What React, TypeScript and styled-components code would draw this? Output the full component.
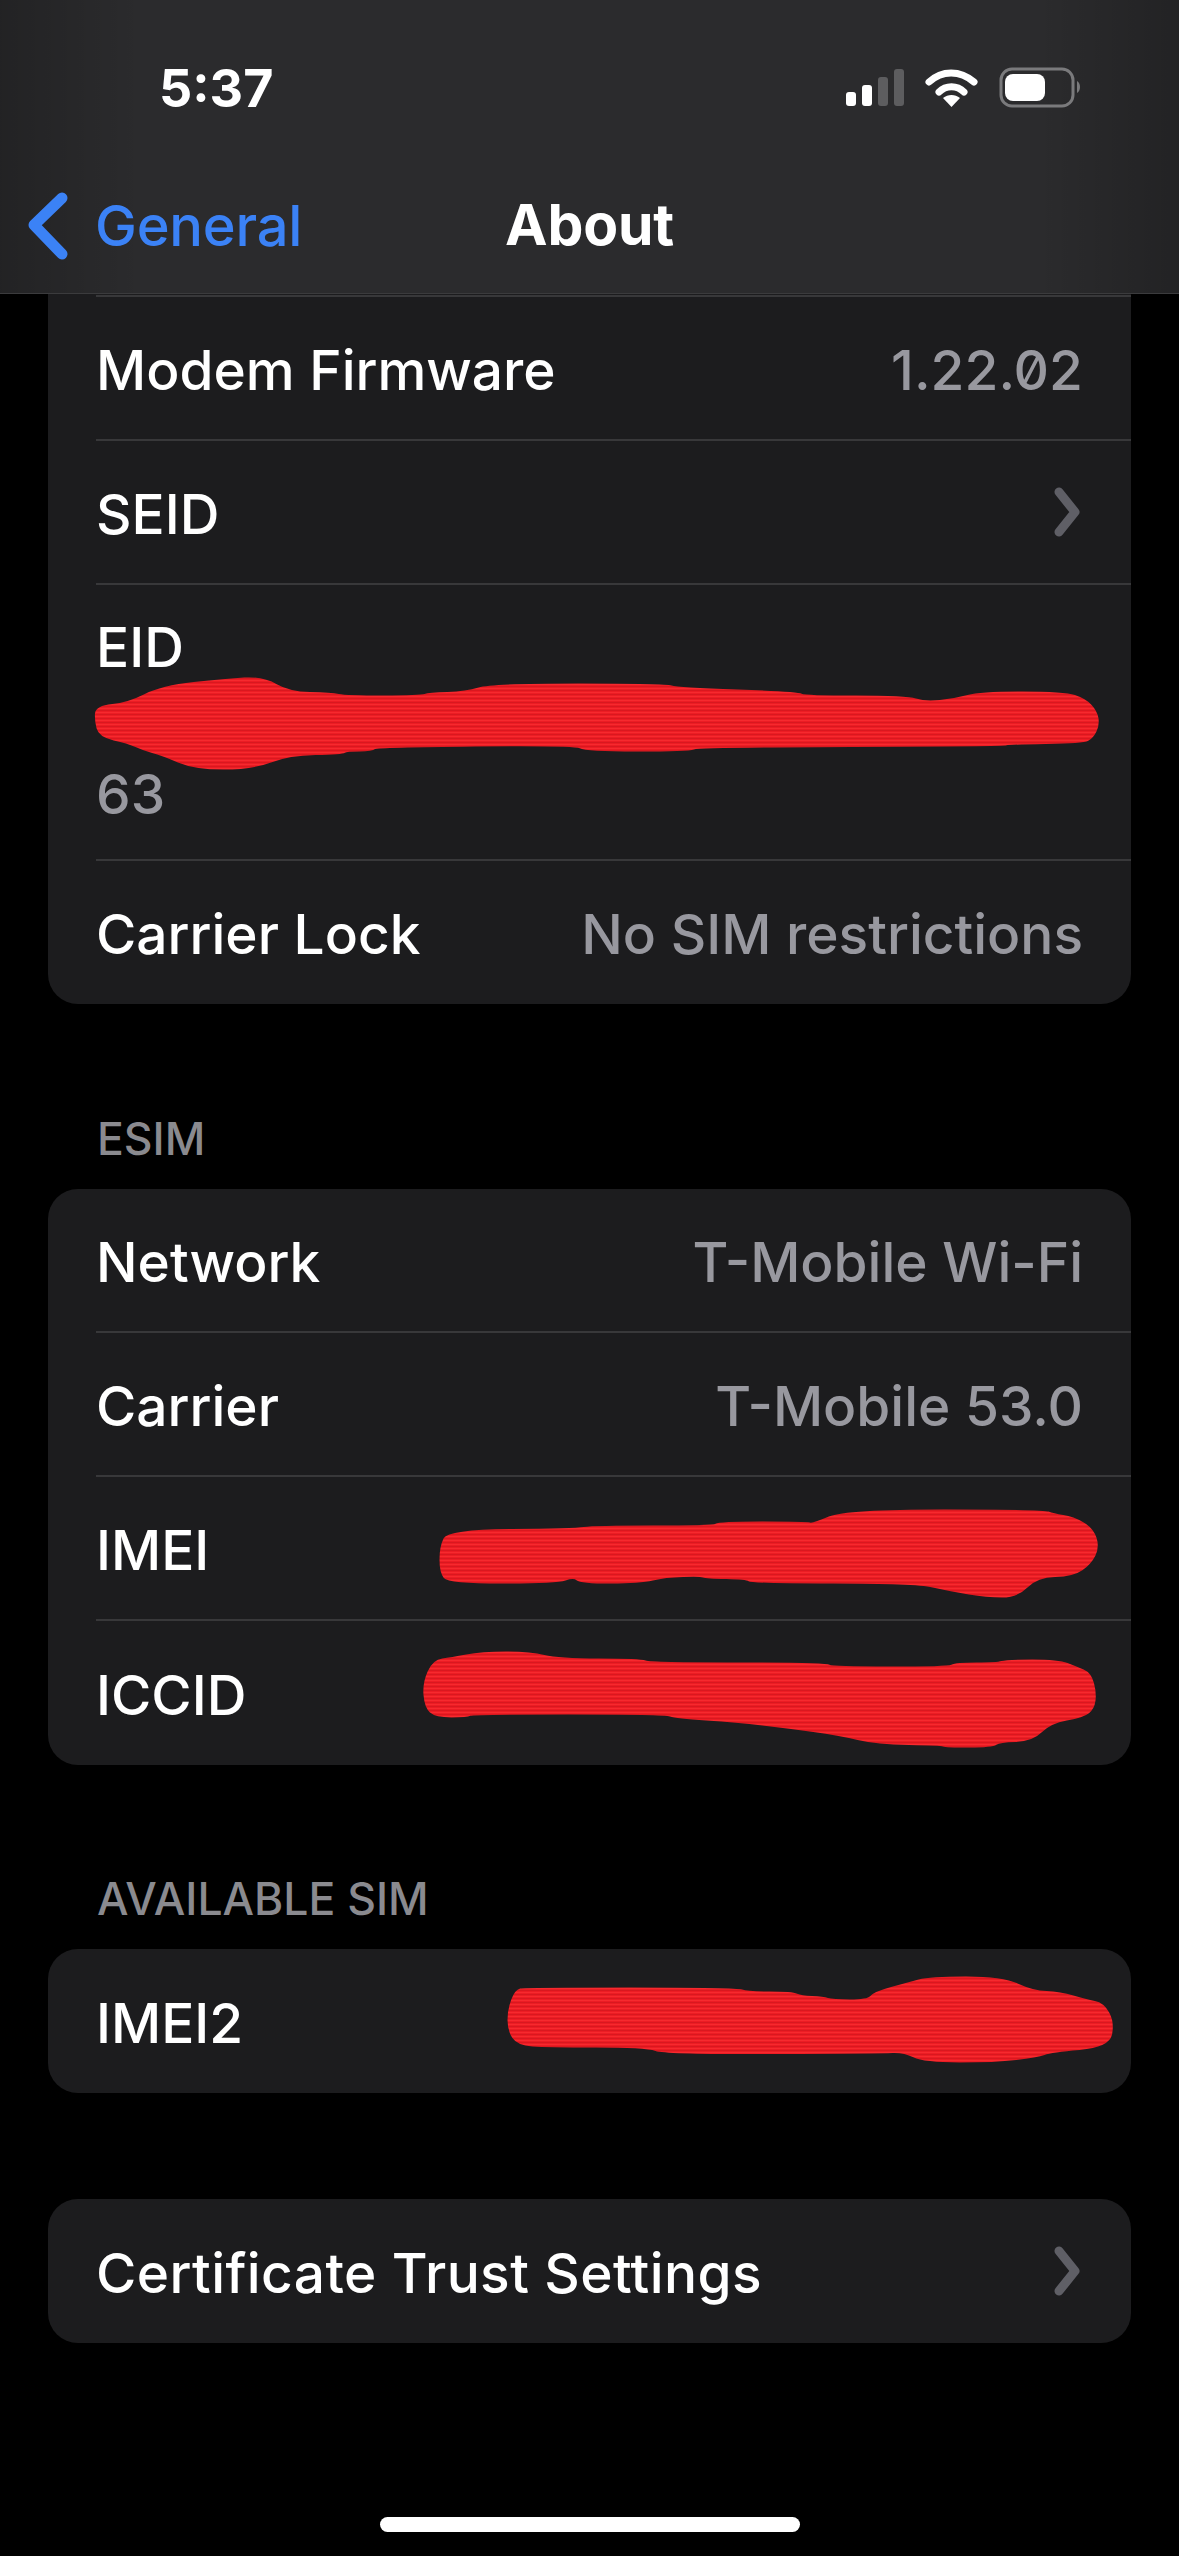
import styled, { createGlobalStyle } from 'styled-components'

const GlobalStyle = createGlobalStyle`
  html,
  body {
    margin: 0;
    background: #000;
  }
`

const Page = styled.div`
  position: relative;
  width: 1179px;
  height: 2556px;
  overflow: hidden;
  background: #000;
  font-family: Inter, 'Noto Sans', sans-serif;
  color: #fff;
`

const Header = styled.header`
  box-sizing: border-box;
  height: 294px;
  border-bottom: 1px solid #3b3b3d;
  background:
    linear-gradient(90deg, rgba(0, 0, 0, 0.2) 0, rgba(0, 0, 0, 0) 12%, rgba(0, 0, 0, 0) 88%, rgba(0, 0, 0, 0.2) 100%),
    #2b2b2d;
`

const StatusBar = styled.div`
  height: 174px;
  padding: 0 95px 0 159px;
  box-sizing: border-box;
  display: flex;
  align-items: flex-start;
  justify-content: space-between;
`

const Time = styled.div`
  margin-top: 59px;
  font-size: 52px;
  line-height: 60px;
  font-weight: 700;
`

const StatusIcons = styled.svg`
  margin-top: 64px;
  width: 240px;
  height: 48px;
`

const NavBar = styled.nav`
  position: relative;
  display: flex;
  justify-content: center;
  height: 90px;
`

const BackLink = styled.div`
  position: absolute;
  left: 26px;
  top: 16px;
  display: flex;
  align-items: center;
  gap: 25px;
  color: #3b82f6;
  font-size: 56px;
  line-height: 70px;
  font-weight: 500;
  letter-spacing: -0.2px;
`

const Title = styled.h1`
  margin: 16px 0 0;
  font-size: 57px;
  line-height: 70px;
  font-weight: 700;
  letter-spacing: -0.2px;
`

const Card = styled.section<{ $flatTop?: boolean; $gap: number }>`
  margin: ${({ $gap }) => $gap}px 48px 0;
  background: #1c1c1e;
  border-radius: ${({ $flatTop }) => ($flatTop ? '0 0 30px 30px' : '30px')};
`

const TopRule = styled.div`
  height: 3px;
  margin-left: 48px;
  box-sizing: border-box;
  border-bottom: 2px solid #38383a;
`

const SectionLabel = styled.div`
  position: relative;
  top: -72px;
  height: 0;
  padding-left: 49px;
  font-size: 44.5px;
  line-height: 44px;
  font-weight: 500;
  color: #8a8a8f;
`

const Row = styled.div<{ $height?: number }>`
  position: relative;
  box-sizing: border-box;
  height: ${({ $height }) => $height ?? 144}px;
  margin-left: 48px;
  padding: 3px 48px 0 0;
  display: flex;
  align-items: center;
  justify-content: space-between;
  border-bottom: 2px solid #38383a;

  &:last-child {
    border-bottom: none;
  }
`

const StackedRow = styled(Row)`
  display: block;
  padding-top: 31px;
`

const Label = styled.span<{ $tracking?: number }>`
  font-size: 55px;
  line-height: 62px;
  font-weight: 500;
  letter-spacing: ${({ $tracking }) => $tracking ?? 0}px;
`

const Value = styled.span<{ $slashedZero?: boolean }>`
  font-size: 55px;
  line-height: 62px;
  font-weight: 500;
  color: #98989f;
  font-feature-settings: ${({ $slashedZero }) => ($slashedZero ? "'zero'" : 'normal')};
`

const StackedValue = styled(Value)`
  display: block;
  margin-top: 85px;
`

const ChevronIcon = styled.svg`
  width: 34px;
  height: 50px;
  margin: -3px -2px 0 0;
`

const ScribbleSvg = styled.svg<{ $left: number; $top: number }>`
  position: absolute;
  left: ${({ $left }) => $left}px;
  top: ${({ $top }) => $top}px;
`

const HomeIndicator = styled.div`
  position: absolute;
  left: 380px;
  top: 2517px;
  width: 420px;
  height: 15px;
  border-radius: 8px;
  background: #fff;
`

type ScribbleProps = {
  id: string
  rowLeft: number
  rowTop: number
  box: [number, number, number, number]
  points: string
}

// rounds the outline off: each point turns into a curve between its neighbours' midpoints
const smoothOutline = (points: string) => {
  const pts = points.split(' ').map((p) => p.split(',').map(Number))
  const mid = (a: number[], b: number[]) => `${(a[0] + b[0]) / 2} ${(a[1] + b[1]) / 2}`
  const segments = pts.map((p, i) => `Q${p[0]} ${p[1]} ${mid(p, pts[(i + 1) % pts.length])}`)

  return `M${mid(pts[pts.length - 1], pts[0])} ${segments.join(' ')} Z`
}

// red marker blotches, points are in page pixels
const Scribble = ({ id, rowLeft, rowTop, box, points }: ScribbleProps) => {
  const [x, y, w, h] = box

  return (
    <ScribbleSvg
      $left={x - rowLeft}
      $top={y - rowTop}
      width={w}
      height={h}
      viewBox={`${x} ${y} ${w} ${h}`}>
      <defs>
        <pattern id={id} patternUnits="userSpaceOnUse" width="6" height="4">
          <rect width="6" height="4" fill="#ec1c24" />
          <rect width="6" height="1" fill="#f62a2e" />
          <rect y="2" width="6" height="1" fill="#d9181f" />
        </pattern>
      </defs>
      <path d={smoothOutline(points)} fill={`url(#${id})`} stroke={`url(#${id})`} strokeWidth="3" strokeLinejoin="round" />
    </ScribbleSvg>
  )
}

const Chevron = () => (
  <ChevronIcon viewBox="0 0 34 50">
    <path d="M8 5 L24 25 L8 45" fill="none" stroke="#5f5f66" strokeWidth="9" strokeLinecap="round" strokeLinejoin="round" />
  </ChevronIcon>
)

const eidPoints =
  '97,707 128,704 162,687 226,680 263,678 289,693 331,694 346,697 421,697 429,694 466,693 492,685 665,685 677,689 797,693 805,697 906,697 925,703 955,700 981,693 1064,693 1085,700 1096,712 1098,725 1092,737 1083,742 1008,743 1004,745 699,746 688,750 586,750 575,744 376,746 372,750 346,750 342,753 289,754 252,768 195,768 162,754 143,749 128,742 100,736 96,720'

const imeiPoints =
  '441,1547 449,1531 574,1530 594,1527 714,1527 719,1523 806,1523 813,1525 846,1511 1043,1511 1053,1515 1073,1518 1092,1529 1098,1547 1090,1563 1073,1575 1037,1576 1017,1596 987,1596 951,1590 915,1582 752,1582 747,1578 706,1577 701,1575 665,1576 640,1582 581,1582 574,1576 556,1582 449,1582 441,1572'

const iccidPoints =
  '424,1683 434,1661 451,1659 482,1653 530,1653 558,1660 640,1660 650,1664 826,1664 831,1668 948,1668 956,1664 997,1664 1007,1661 1058,1661 1076,1668 1090,1674 1095,1693 1093,1708 1083,1716 1050,1722 1032,1740 999,1741 992,1746 946,1746 941,1744 877,1743 839,1734 788,1727 737,1721 676,1717 665,1713 472,1713 467,1716 436,1716 426,1707'

const imei2Points =
  '509,2010 516,1991 525,1989 736,1989 747,1993 792,1993 801,1997 823,1998 832,2001 868,2001 875,1993 908,1984 930,1978 1002,1978 1033,1992 1060,1993 1086,2001 1103,2004 1113,2023 1108,2046 1051,2051 1037,2056 995,2061 924,2061 904,2051 881,2052 667,2053 645,2046 547,2046 518,2044 509,2030'

const App = () => {
  return (
    <Page>
      <GlobalStyle />

      <Header>
        <StatusBar>
          <Time>5:37</Time>
          <StatusIcons viewBox="844 64 240 48">
            <rect x="846" y="92" width="10" height="14" rx="3" fill="#fff" />
            <rect x="862" y="85" width="10" height="21" rx="3" fill="#fff" />
            <rect x="878" y="77" width="10" height="29" rx="3" fill="#5d5d5f" />
            <rect x="894" y="69" width="10" height="37" rx="3" fill="#5d5d5f" />
            <path d="M929 82 C 942 70, 960 70, 974 82" fill="none" stroke="#fff" strokeWidth="7" strokeLinecap="round" />
            <path d="M939 92 C 946 85, 957 85, 964 92" fill="none" stroke="#fff" strokeWidth="7" strokeLinecap="round" />
            <path d="M943 98 C 948 94, 955 94, 960 98 L951.5 107 Z" fill="#fff" />
            <rect x="1001" y="69" width="72" height="37" rx="11" fill="none" stroke="#7a7a7c" strokeWidth="3" />
            <rect x="1005" y="74" width="40" height="27" rx="8" fill="#fff" />
            <path d="M1077 81 C 1081 83, 1081 91, 1077 93 Z" fill="#7a7a7c" />
          </StatusIcons>
        </StatusBar>
        <NavBar>
          <BackLink>
            <svg width="44" height="72" viewBox="0 0 44 72">
              <path d="M36 8 L8 35 L36 64" fill="none" stroke="#3b82f6" strokeWidth="11" strokeLinecap="round" strokeLinejoin="round" />
            </svg>
            General
          </BackLink>
          <Title>About</Title>
        </NavBar>
      </Header>

      <Card $flatTop $gap={0}>
        <TopRule />
        <Row>
          <Label>Modem Firmware</Label>
          <Value $slashedZero>1.22.02</Value>
        </Row>
        <Row>
          <Label>SEID</Label>
          <Chevron />
        </Row>
        <StackedRow $height={276}>
          <Label>EID</Label>
          <Scribble id="eid" rowLeft={96} rowTop={585} box={[92, 676, 1010, 95]} points={eidPoints} />
          <StackedValue>63</StackedValue>
        </StackedRow>
        <Row $height={143}>
          <Label>Carrier Lock</Label>
          <Value>No SIM restrictions</Value>
        </Row>
      </Card>

      <Card $gap={185}>
        <SectionLabel>ESIM</SectionLabel>
        <Row>
          <Label>Network</Label>
          <Value>T-Mobile Wi-Fi</Value>
        </Row>
        <Row>
          <Label>Carrier</Label>
          <Value>T-Mobile 53.0</Value>
        </Row>
        <Row>
          <Label>IMEI</Label>
          <Scribble id="imei" rowLeft={96} rowTop={1477} box={[438, 1508, 664, 91]} points={imeiPoints} />
        </Row>
        <Row>
          <Label>ICCID</Label>
          <Scribble id="iccid" rowLeft={96} rowTop={1621} box={[421, 1650, 677, 99]} points={iccidPoints} />
        </Row>
      </Card>

      <Card $gap={184}>
        <SectionLabel>AVAILABLE SIM</SectionLabel>
        <Row>
          <Label>IMEI2</Label>
          <Scribble id="imei2" rowLeft={96} rowTop={1949} box={[506, 1975, 610, 89]} points={imei2Points} />
        </Row>
      </Card>

      <Card $gap={106}>
        <Row>
          <Label $tracking={0.4}>Certificate Trust Settings</Label>
          <Chevron />
        </Row>
      </Card>

      <HomeIndicator />
    </Page>
  )
}

export default App
